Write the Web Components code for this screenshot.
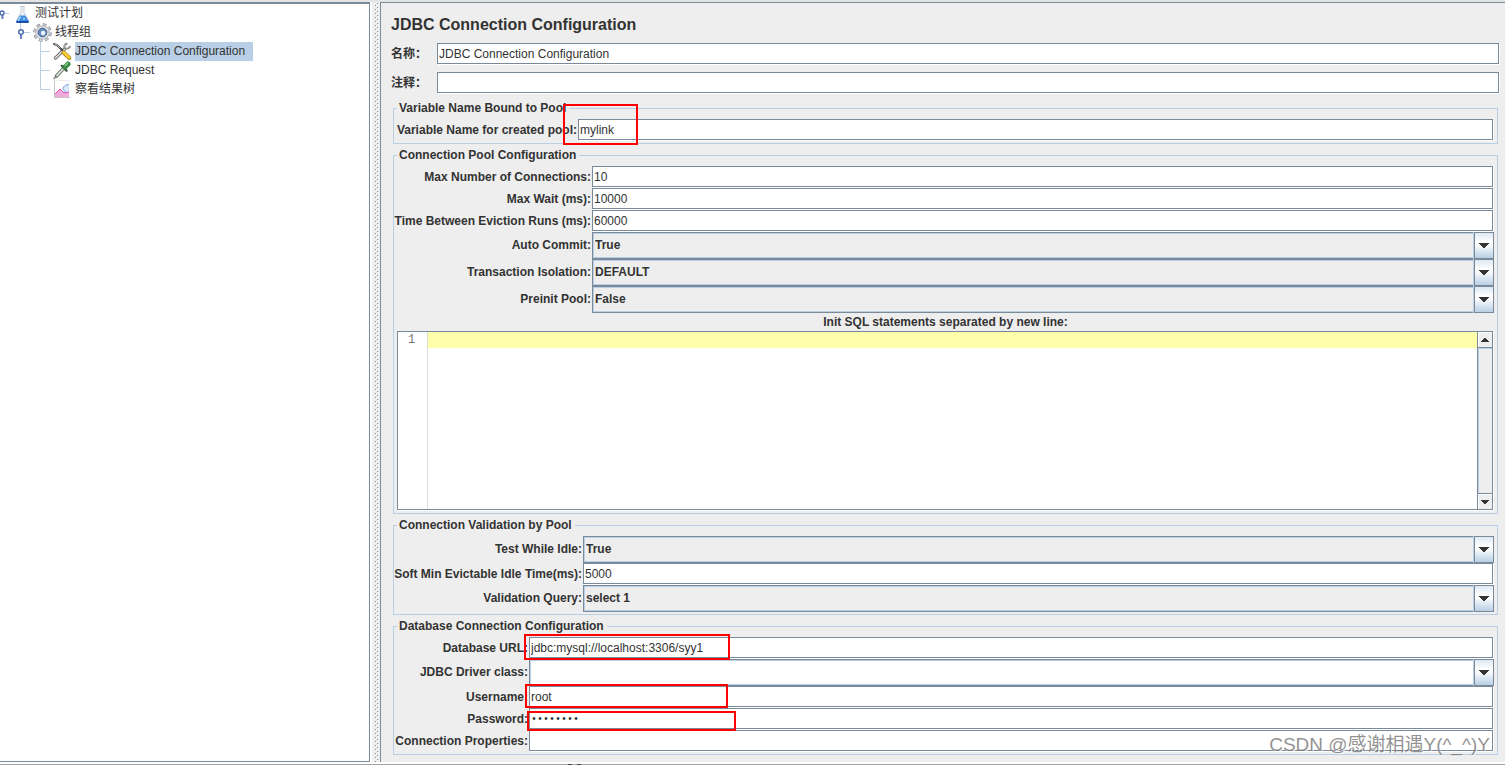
<!DOCTYPE html>
<html lang="zh-CN">
<head>
<meta charset="utf-8">
<title>JDBC Connection Configuration</title>
<style>
  :root {
    --line: #7a8a99;
    --soft: #b8cfe5;
    --panel: #eeeeee;
    --ink: #333333;
  }
  html, body { margin: 0; }
  body {
    background: var(--panel);
    color: var(--ink);
    font: 12px/15px "Liberation Sans", "Noto Sans CJK SC", sans-serif;
  }
</style>
</head>
<body>
<jm-app>
  <jm-tree slot="tree">
    <jm-node depth="0" icon="flask">测试计划</jm-node>
    <jm-node depth="1" icon="gear">线程组</jm-node>
    <jm-node depth="2" icon="tools" selected>JDBC Connection Configuration</jm-node>
    <jm-node depth="2" icon="dropper">JDBC Request</jm-node>
    <jm-node depth="2" icon="chart" last>察看结果树</jm-node>
  </jm-tree>
  <jm-title>JDBC Connection Configuration</jm-title>
  <jm-head>
    <jm-text label="名称：" value="JDBC Connection Configuration"></jm-text>
    <jm-text label="注释："></jm-text>
  </jm-head>
  <jm-groups>
    <jm-group name="Variable Name Bound to Pool" style="--label:180px">
      <jm-text label="Variable Name for created pool:" value="mylink"><jm-mark style="--x:-15px;--y:-15px;--w:75px;--h:41px"></jm-mark></jm-text>
    </jm-group>
    <jm-group name="Connection Pool Configuration" style="--label:194px">
      <jm-text label="Max Number of Connections:" value="10"></jm-text>
      <jm-text label="Max Wait (ms):" value="10000"></jm-text>
      <jm-text label="Time Between Eviction Runs (ms):" value="60000"></jm-text>
      <jm-combo label="Auto Commit:" value="True"></jm-combo>
      <jm-combo label="Transaction Isolation:" value="DEFAULT"></jm-combo>
      <jm-combo label="Preinit Pool:" value="False"></jm-combo>
      <jm-editor label="Init SQL statements separated by new line:"></jm-editor>
    </jm-group>
    <jm-group name="Connection Validation by Pool" style="--label:185px">
      <jm-combo label="Test While Idle:" value="True"></jm-combo>
      <jm-text label="Soft Min Evictable Idle Time(ms):" value="5000"></jm-text>
      <jm-combo label="Validation Query:" value="select 1"></jm-combo>
    </jm-group>
    <jm-group name="Database Connection Configuration" style="--label:131px">
      <jm-text label="Database URL:" value="jdbc:mysql://localhost:3306/syy1"><jm-mark style="--x:-5px;--y:-3px;--w:206px;--h:26px"></jm-mark></jm-text>
      <jm-combo label="JDBC Driver class:" value="" editable></jm-combo>
      <jm-text label="Username:" value="root"><jm-mark style="--x:-4px;--y:-2px;--w:203px;--h:24px"></jm-mark></jm-text>
      <jm-text label="Password:" value="password" type="password"><jm-mark style="--x:-2px;--y:3px;--w:209px;--h:20px"></jm-mark></jm-text>
      <jm-text label="Connection Properties:"></jm-text>
    </jm-group>
  </jm-groups>
  <jm-watermark slot="over">CSDN @感谢相遇Y(^_^)Y</jm-watermark>
</jm-app>

<script>
const define = (name, render) => customElements.define(name, class extends HTMLElement {
  connectedCallback() {
    if (this.shadowRoot) return;
    this.attachShadow({ mode: 'open' }).innerHTML = render(this);
  }
});
const attr = (el, name) => el.getAttribute(name) || '';

define('jm-app', () => `
<style>
  :host { display: flex; flex-direction: column; min-height: 100vh; position: relative; overflow: hidden; box-sizing: border-box; border-top: 2px solid #e4e4e2; }
  .split { flex: 1; display: grid; grid-template-columns: 372px 8px minmax(0, 1fr); }
  .side { background: #fff; display: grid; padding-right: 2px; }
  .bar { background: var(--panel); }
  .bar svg { display: block; width: 8px; height: 100%; }
  .main { border-left: 1px solid var(--line); border-top: 1px solid var(--line); padding: 11px 5px 0 10px; display: flex; flex-direction: column; gap: 7px; }
  .status { height: 3px; border-top: 2px solid #fff; box-sizing: border-box; background:
    linear-gradient(#444, #444) 568px 0 / 4px 1px no-repeat,
    linear-gradient(#444, #444) 577px 0 / 4px 1px no-repeat, #a3a3a3; }
</style>
<div class="split">
  <aside class="side"><slot name="tree"></slot></aside>
  <div class="bar"><svg aria-hidden="true"><defs><pattern id="dots" width="4" height="4" patternUnits="userSpaceOnUse" x="3" y="3"><path d="M0 0h1v1h-1zM2 2h1v1h-1z" fill="#7a8a99"/><path d="M1 1h1v1h-1zM3 3h1v1h-1z" fill="#fff"/></pattern></defs><rect x="3" width="4" height="100%" fill="url(#dots)"/></svg></div>
  <main class="main"><slot></slot></main>
</div>
<div class="status"></div>
<slot name="over"></slot>`);

define('jm-tree', () => `
<style>
  :host { display: block; background: #fff; border: solid var(--line); border-width: 2px 1px 1px 0; overflow: hidden; }
</style>
<div role="tree"><slot></slot></div>`);

const icons = {
  flask: `<g transform="translate(15 1)">
    <path d="M5.300 1.500h4.400" stroke="#c3c9cf"/>
    <path d="M6 2v5.500L1.300 16q-.7 2 1.500 2h9.400q2.200 0 1.500-2L9 7.500V2" fill="#eef1f5" stroke="#c5ccd4"/>
    <path d="M4.700 10.500h5.600L13.600 16q.6 1.900-1.200 1.900H2.600q-1.800 0-1.200-1.900z" fill="#3f8be0"/>
    <path d="M1.200 16h12.600v1q-.5 1.200-1.500 1.200H2.700q-1.200-.2-1.400-1.200z" fill="#1b4fa8"/>
    <path d="M5.500 11.500l-2.500 4.300" stroke="#a8d5ff" stroke-width="1.500"/><circle cx="9" cy="13.800" r="1.200" fill="#8cc8ff"/></g>`,
  gear: `<g transform="translate(42.500 9.500)">
    <circle r="8" fill="none" stroke="#84888e" stroke-width="2.600" stroke-dasharray="3.600 2.683"/>
    <circle r="7.700" fill="none" stroke="#c9ccd0" stroke-width="1.800" stroke-dasharray="2.600 3.447" stroke-dashoffset="-.4"/>
    <circle r="6.700" fill="#dfe1e4" stroke="#a4a8ad" stroke-width=".8"/><circle r="4.300" fill="#5f8cc4" stroke="#4a6285"/>
    <circle cx=".6" cy=".6" r="2.300" fill="#eaf3fc"/></g>`,
  tools: `<g transform="translate(53 0)" fill="none" stroke-linecap="round">
    <path d="M2.500 16L12 6.500" stroke="#666" stroke-width="3.200"/><path d="M2.500 16L12 6.500" stroke="#dedede" stroke-width="1.600"/>
    <path d="M13.500 1.800q-2.600 1.400-1.700 4 2.600 1.500 5-.8" stroke="#8a8a8a" stroke-width="2.200"/><path d="M12.300 3.200q-.5 1.500.3 2.300 1.200.6 2.600.1" stroke="#ddd"/>
    <path d="M1 2l3 1 5.500 5.500" stroke="#444" stroke-width="2"/><path d="M1.800 2.200L4 3l3 3" stroke="#ccc" stroke-width=".8"/>
    <path d="M10.500 10.500l5.800 5.500" stroke="#a57a12" stroke-width="4"/><path d="M10.500 10.300l5.700 5.500" stroke="#f8ce32" stroke-width="2.600"/></g>`,
  dropper: `<g transform="translate(53 0)" fill="none" stroke-linecap="round">
    <path d="M1 17.500l3-3" stroke="#777" stroke-width="1.400"/><path d="M3.500 15L10.500 7.500" stroke="#6d776d" stroke-width="3.600"/><path d="M4 14.500L10.500 7.500" stroke="#dfe8de" stroke-width="1.800"/>
    <path d="M8.800 4.800l4.800 4.800" stroke="#33543a" stroke-width="2.200"/><path d="M12 6l3-3" stroke="#3a8544" stroke-width="5"/><path d="M12.300 4.600l2.200-2.200" stroke="#83c980" stroke-width="1.800"/></g>`,
  chart: `<g transform="translate(53 0)" fill="none">
    <path d="M1.500 0v17.500M1 17.500h16" stroke="#c4c4c4"/><path d="M1 .5h16" stroke="#ededed"/>
    <path d="M16 5h-3l-3 3v3l4 3 2-1" fill="#d8e8fb"/><path d="M16 4.500q-5 0-6.200 4.500l3 3.500 3.200 1" stroke="#76a3df"/>
    <path d="M2 17v-3l5-5 4 4 5-1v5z" fill="#f3a9dc"/><path d="M2 14l5-5 4 4 5-1" stroke="#d853ad"/></g>`
};
const guides = {
  0: '<path d="M5 9.500h4" stroke="#b8cfe5"/><path d="M2.500 10v5" stroke="#6382bf" stroke-width="2"/><circle cx="2" cy="9" r="2" fill="#fff" stroke="#4c6fb5" stroke-width="1.500"/>',
  1: '<path d="M20.500 0v6M24 9.500h6" stroke="#b8cfe5"/><path d="M21 11v5" stroke="#6382bf" stroke-width="2"/><circle cx="21" cy="9" r="2.300" fill="#fff" stroke="#4c6fb5" stroke-width="1.500"/>',
  2: '<path d="M40.500 0v19M40 9.500h10" stroke="#b8cfe5"/>',
  end: '<path d="M40.500 0v9.500h9.500" stroke="#b8cfe5" fill="none"/>'
};
define('jm-node', el => {
  const depth = attr(el, 'depth');
  const width = 35 + 20 * depth;
  return `
<style>
  :host { display: flex; height: 19px; }
  svg { flex: none; display: block; }
  span { line-height: 19px; white-space: nowrap; padding-right: 8px; }
  .on { background: var(--soft); }
</style>
<svg width="${width}" height="19" aria-hidden="true">${guides[el.hasAttribute('last') ? 'end' : depth]}${icons[attr(el, 'icon')]}</svg>
<span role="treeitem" class="${el.hasAttribute('selected') ? 'on' : ''}"><slot></slot></span>`;
});

define('jm-title', () => `
<style>:host { display: block; } h1 { margin: 0; font-size: 16px; line-height: 22px; }</style>
<h1><slot></slot></h1>`);

define('jm-head', () => `
<style>:host { display: grid; gap: 7px; --label: 45px; --side: start; }</style>
<slot></slot>`);

define('jm-groups', () => `
<style>:host { display: grid; gap: 4px; padding: 0 2px 7px; }</style>
<slot></slot>`);

define('jm-group', el => `
<style>
  :host { display: block; }
  fieldset { margin: 0; min-width: 0; border: 1px solid var(--soft); padding: 3px 3px 2px; }
  legend { padding: 0 3px 0 2px; font-weight: bold; }
</style>
<fieldset><legend>${attr(el, 'name')}</legend><slot></slot></fieldset>`);

const rowCss = `
  :host { display: grid; grid-template-columns: var(--label) minmax(0, 1fr); column-gap: 1px; align-items: center; }
  label { font-weight: bold; justify-self: var(--side, end); white-space: nowrap; }
  .field { position: relative; display: grid; }`;

define('jm-text', el => `
<style>${rowCss}
  .field { padding: 0 1px 1px 0; }
  input { box-sizing: border-box; width: 100%; height: 21px; margin: 0; padding: 0 1px; border: 1px solid var(--line); border-radius: 0; background: #fff; color: var(--ink); font: inherit; box-shadow: 1px 1px 0 #fff; outline: 0; }
  input[type=password] { padding-top: 2px; font: 10px "Liberation Mono", monospace; }
</style>
<label for="f">${attr(el, 'label')}</label>
<div class="field"><input id="f" type="${attr(el, 'type') || 'text'}" value="${attr(el, 'value')}"><slot></slot></div>`);

define('jm-mark', () => `
<style>:host { position: absolute; left: var(--x); top: var(--y); width: var(--w); height: var(--h); box-sizing: border-box; border: 2px solid #f00; pointer-events: none; z-index: 1; }</style>`);

define('jm-combo', el => `
<style>${rowCss}
  .field { grid-template-columns: minmax(0, 1fr) 20px; }
  select { grid-area: 1 / 1 / 2 / 3; appearance: none; box-sizing: border-box; height: 27px; margin: 0; padding: 0 22px 1px 2px; border: 1px solid var(--line); border-radius: 0; background: ${el.hasAttribute('editable') ? '#fff' : 'var(--panel)'}; color: var(--ink); font: inherit; font-weight: bold; box-shadow: inset 1px 1px 0 var(--soft), inset 0 -1px 0 var(--soft); outline: 0; }
  .arrow { grid-area: 1 / 2; pointer-events: none; z-index: 1; box-sizing: border-box; border: 1px solid var(--line); box-shadow: -1px 0 0 var(--soft); background: linear-gradient(#dde8f3, #fff 35%, #fff 45%, #b8cfe5); display: grid; place-items: center; }
  svg { display: block; }
</style>
<label for="f">${attr(el, 'label')}</label>
<div class="field"><select id="f"><option>${attr(el, 'value')}</option></select>
<span class="arrow"><svg width="10" height="5" shape-rendering="crispEdges" aria-hidden="true"><path d="M0 0h10v1h-1v1h-1v1h-1v1h-1v1h-2v-1h-1v-1h-1v-1h-1v-1h-1z" fill="#333"/></svg></span></div>`);

define('jm-editor', el => `
<style>
  :host { display: block; }
  label { display: block; text-align: center; font-weight: bold; line-height: 18px; }
  .box { display: grid; grid-template-columns: 30px minmax(0, 1fr) 15px; border: 1px solid var(--line); margin: 0 1px 1px 0; box-shadow: 1px 1px 0 #fff; background: #fff; }
  .gutter { border-right: 1px solid #ddd; text-align: center; color: #777; font: 12px/16px "Liberation Mono", monospace; padding-right: 2px; }
  textarea { display: block; box-sizing: border-box; width: 100%; height: 177px; margin: 0; border: 0; padding: 0 2px; resize: none; outline: 0; overflow: hidden; border-radius: 0; font: 12px/16px "Liberation Mono", monospace; color: var(--ink); background: linear-gradient(#ffffaa, #ffffaa) 0 0 / 100% 16px no-repeat #fff; }
  .scroll { border-left: 1px solid var(--line); background: #eee; display: grid; grid-template-rows: 16px 1fr 16px; }
  .track { box-shadow: inset 1px 0 0 var(--soft), inset 0 1px 0 var(--soft); }
  button { margin: 0; padding: 0; border: 0; background: #eee; display: grid; place-items: center; box-shadow: inset 1px 1px 0 #fff; }
  .up { border-bottom: 1px solid var(--line); }
  .down { border-top: 1px solid var(--line); }
</style>
<label for="f">${attr(el, 'label')}</label>
<div class="box"><div class="gutter">1</div><textarea id="f"></textarea>
<div class="scroll"><button class="up" aria-label="Scroll up"><svg width="8" height="4" shape-rendering="crispEdges"><path d="M3 0h2v1h1v1h1v1h1v1H0V3h1V2h1V1h1z" fill="#333"/></svg></button><div class="track"></div><button class="down" aria-label="Scroll down"><svg width="8" height="4" shape-rendering="crispEdges"><path d="M0 0h8v1H7v1H6v1H5v1H3V3H2V2H1V1H0z" fill="#333"/></svg></button></div></div>`);

define('jm-watermark', () => `
<style>:host { position: absolute; right: 15px; bottom: 7px; font-size: 19px; line-height: 26px; color: rgba(110, 110, 110, .75); text-shadow: 1px 1px 0 rgba(255, 255, 255, .7); pointer-events: none; z-index: 2; white-space: nowrap; }</style>
<slot></slot>`);
</script>
</body>
</html>
